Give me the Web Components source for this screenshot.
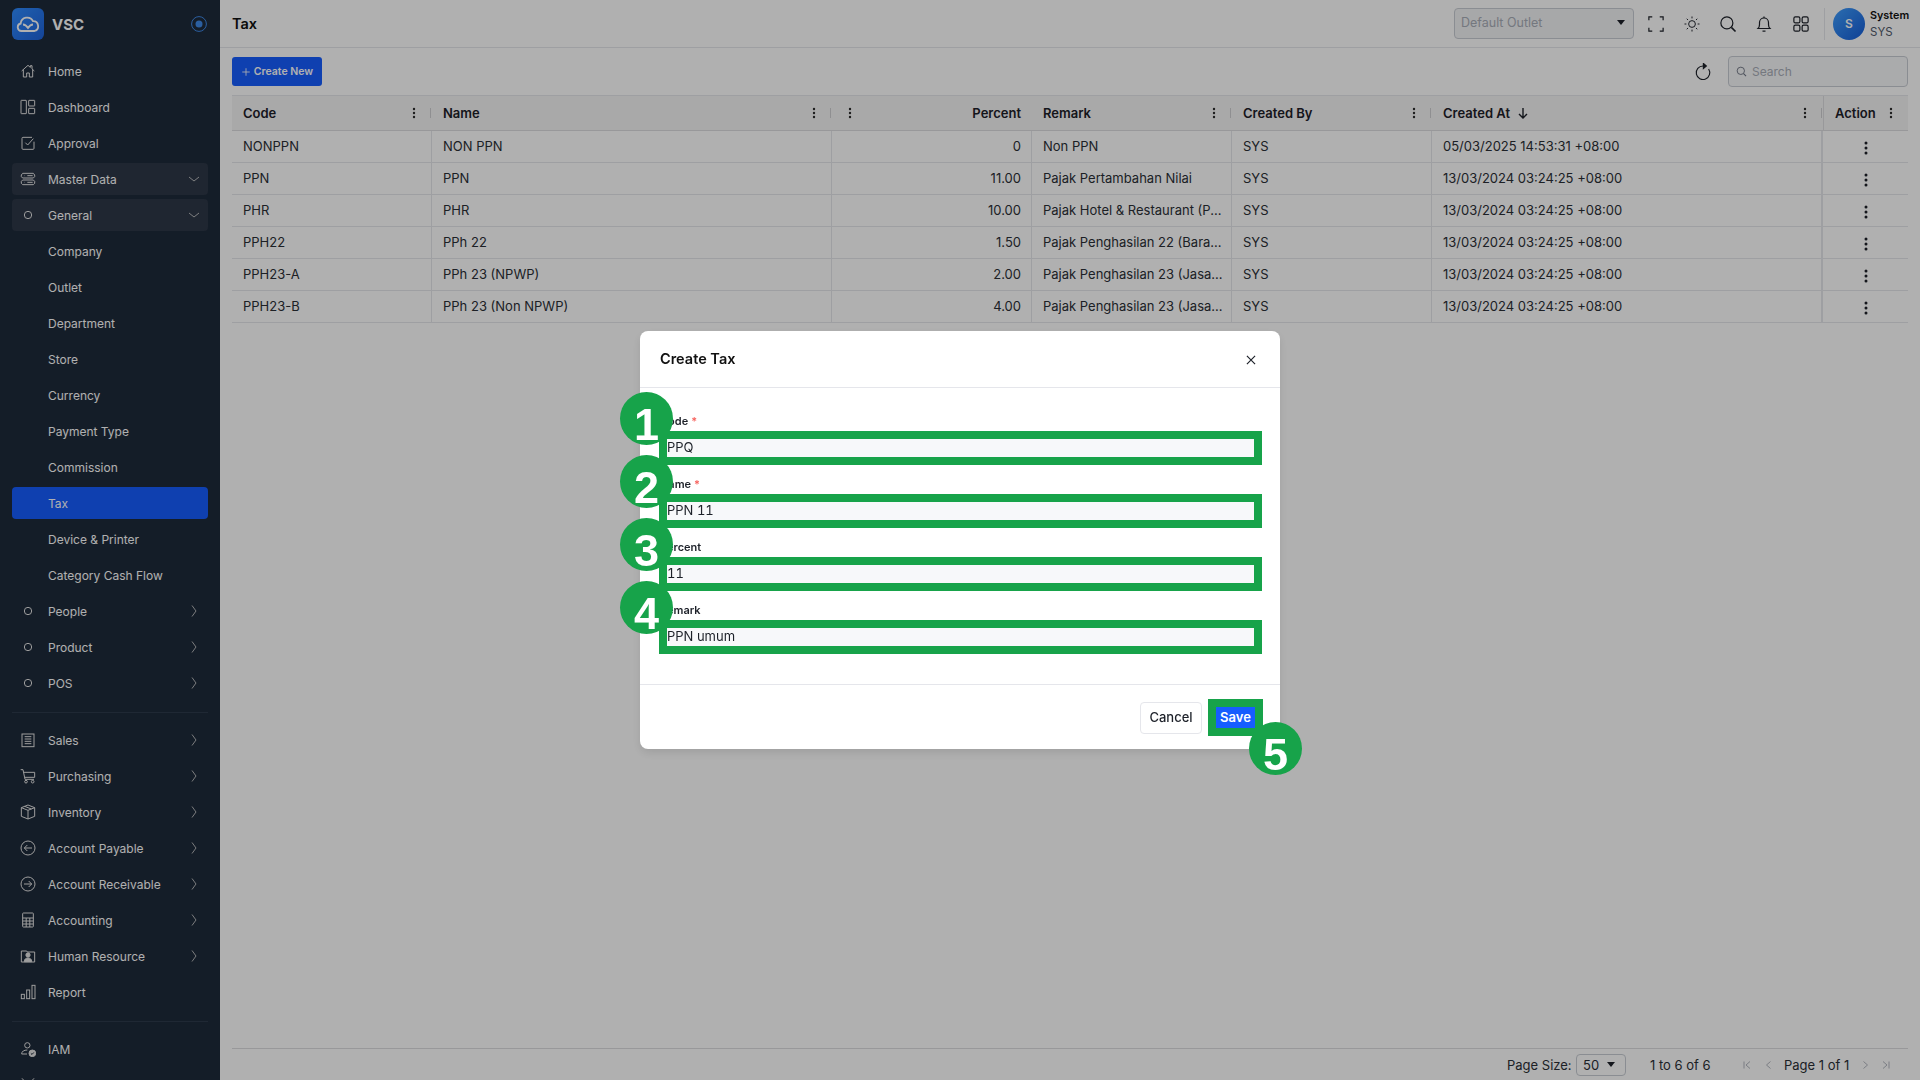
<!DOCTYPE html>
<html>
<head>
<meta charset="utf-8">
<title>Tax</title>
<style>
  html, body { margin: 0; height: 100%; overflow: hidden; background: #fff; }
  body { font-family: Inter, "Liberation Sans", sans-serif; font-size: 13px; color: #1d2129; }
  app-shell { height: 1080px; }
</style>
</head>
<body>
<app-shell>
  <side-nav slot="nav">
    <nav-item icon="home">Home</nav-item>
    <nav-item icon="dashboard">Dashboard</nav-item>
    <nav-item icon="approval">Approval</nav-item>
    <nav-item icon="master" open active>Master Data</nav-item>
    <nav-item icon="dot" open active>General</nav-item>
    <nav-item>Company</nav-item>
    <nav-item>Outlet</nav-item>
    <nav-item>Department</nav-item>
    <nav-item>Store</nav-item>
    <nav-item>Currency</nav-item>
    <nav-item>Payment Type</nav-item>
    <nav-item>Commission</nav-item>
    <nav-item selected>Tax</nav-item>
    <nav-item>Device &amp; Printer</nav-item>
    <nav-item>Category Cash Flow</nav-item>
    <nav-item icon="dot" more>People</nav-item>
    <nav-item icon="dot" more>Product</nav-item>
    <nav-item icon="dot" more>POS</nav-item>
    <nav-rule></nav-rule>
    <nav-item icon="sales" more>Sales</nav-item>
    <nav-item icon="cart" more>Purchasing</nav-item>
    <nav-item icon="box" more>Inventory</nav-item>
    <nav-item icon="payable" more>Account Payable</nav-item>
    <nav-item icon="receivable" more>Account Receivable</nav-item>
    <nav-item icon="calc" more>Accounting</nav-item>
    <nav-item icon="person" more>Human Resource</nav-item>
    <nav-item icon="report">Report</nav-item>
    <nav-rule></nav-rule>
    <nav-item icon="iam">IAM</nav-item>
    <nav-item icon="tools"></nav-item>
  </side-nav>
  <top-bar slot="top">Tax</top-bar>
  <list-toolbar slot="main"></list-toolbar>
  <tax-table slot="main"></tax-table>
  <page-footer slot="main"></page-footer>
</app-shell>

<modal-layer>
  <tax-dialog>
    <span slot="title">Create Tax</span>
    <tax-field step="1" required><span slot="label">Code</span>PPQ</tax-field>
    <tax-field step="2" required><span slot="label">Name</span>PPN 11</tax-field>
    <tax-field step="3"><span slot="label">Percent</span>11</tax-field>
    <tax-field step="4"><span slot="label">Remark</span>PPN umum</tax-field>
  </tax-dialog>
</modal-layer>

<script>
const ICONS = {
  home: '<path d="M2.500 12 12 3.500l3.500 3.100V4H18v4.900l3.500 3.100"/><path d="M5 10v11h5v-6h4v6h5V10"/>',
  dashboard: '<rect x="1.500" y="2" width="8" height="20" rx=".5"/><rect x="13" y="2" width="9" height="8.500" rx=".5"/><rect x="13" y="14" width="9" height="8" rx=".5"/>',
  approval: '<path d="M21 10v10a1.500 1.500 0 0 1-1.500 1.500h-15A1.500 1.500 0 0 1 3 20V5a1.500 1.500 0 0 1 1.500-1.500H18"/><path d="M8 11.500l3.500 3.500L20 5.500"/>',
  master: '<path d="M4 3.500h16l2 2.500v2.500l-2 2H4l-2-2V6z"/><path d="M4 13.500h16l2 2v3l-2 2H4l-2-2v-3z"/><path d="M6 7h.5M6 17h.5M11 7h8M11 17h8"/>',
  dot: '<circle cx="12" cy="12" r="5.500"/>',
  sales: '<rect x="3" y="3" width="18" height="19"/><path d="M7 7h10M7 10.500h10M7 14h10M7 17.500h10"/>',
  cart: '<path d="M1 2.500h3.500l3 14.500H21"/><path d="M5.500 6.500H22v7.500H7.500"/><circle cx="9" cy="20.500" r="2"/><circle cx="19" cy="20.500" r="2"/>',
  box: '<path d="M12 1.500 22 5.500v13l-10 4-10-4v-13z"/><path d="M2 5.500l10 4 10-4M12 9.500v13M7 3.500l10 4"/>',
  payable: '<circle cx="12" cy="12" r="10.500"/><path d="M18 12H6.500M11 7.500 6.500 12l4.500 4.500"/>',
  receivable: '<circle cx="12" cy="12" r="10.500"/><path d="M6 12h11.500M13 7.500l4.500 4.500-4.500 4.500"/>',
  calc: '<rect x="4" y="1.500" width="16" height="21" rx="1"/><path d="M4 9h16M4 13.500h16M4 18h16M9.300 9v13.500M14.700 9v13.500"/>',
  person: '<path d="M2 4.500h8l1 1.500h11v15H2z"/><circle cx="12" cy="10.500" r="3.200" fill="currentColor"/><path d="M6.500 20.500c0-3.500 2-5.500 5.500-5.500s5.500 2 5.500 5.500z" fill="currentColor"/>',
  report: '<rect x="2" y="15.500" width="4.500" height="6.500"/><rect x="10" y="9" width="4.500" height="13"/><rect x="18" y="2" width="4.500" height="20"/>',
  iam: '<circle cx="11" cy="6.500" r="4"/><path d="M2.500 19.500c0-4 3.500-6 8.500-6M2.500 19.500h8"/><circle cx="18.500" cy="18.500" r="5" fill="currentColor"/><path d="M16.300 18.500l1.700 1.700 2.700-3" stroke="#1e2a3a"/>',
  tools: '<path d="M3 2l8 9M21 2l-8 9M12 11v11"/>',
  fullscreen: '<path d="M7 2.500H2.500V7M17 2.500h4.500V7M7 21.500H2.500V17M17 21.500h4.500V17"/>',
  sun: '<circle cx="12" cy="12" r="4.500"/><path d="M12 2v2.500M12 19.500V22M2 12h2.500M19.500 12H22M5 5l1.700 1.700M17.300 17.300 19 19M5 19l1.700-1.700M17.300 6.700 19 5"/>',
  search: '<circle cx="10.500" cy="10.500" r="8"/><path d="M16.500 16.500 22 22" stroke-width="2.200"/>',
  bell: '<path d="M4 18c1.500-1.500 2-3 2-5.500V10a6 6 0 0 1 12 0v2.500c0 2.500.5 4 2 5.500z"/><path d="M10 21.500h4"/><path d="M12 2v2"/>',
  apps: '<rect x="2.500" y="2.500" width="8" height="8" rx="2"/><rect x="13.500" y="2.500" width="8" height="8" rx="2"/><rect x="2.500" y="13.500" width="8" height="8" rx="2"/><rect x="13.500" y="13.500" width="8" height="8" rx="2"/>',
  refresh: '<path d="M19.500 8A9 9 0 1 1 12 4h3"/><path d="M12.500 .5 16.500 4l-4 3.500z" fill="currentColor"/>',
  close: '<path d="M5 5l14 14M19 5 5 19"/>',
  first: '<path d="M6 5v14M18 5l-8 7 8 7"/>',
  prev: '<path d="M15 5l-8 7 8 7"/>',
  next: '<path d="M9 5l8 7-8 7"/>',
  last: '<path d="M18 5v14M6 5l8 7-8 7"/>',
  chevronDown: '<path d="M2 8l10 8 10-8"/>',
  chevronRight: '<path d="M8 1l8 11-8 11"/>',
  plusSign: '<path d="M12 3v18M3 12h18"/>',
};

function icon(name, size, width) {
  return `<svg width="${size}" height="${size}" viewBox="0 0 24 24" fill="none" stroke="currentColor" stroke-width="${width || 1.5}">${ICONS[name]}</svg>`;
}

const DOTS = `<svg width="4" height="12" viewBox="0 0 4 12" fill="#2b2b2b"><circle cx="2" cy="2" r="1.200"/><circle cx="2" cy="6" r="1.200"/><circle cx="2" cy="10" r="1.200"/></svg>`;
const ROW_DOTS = `<svg width="4" height="14" viewBox="0 0 4 14" fill="#1d2129"><circle cx="2" cy="2" r="1.500"/><circle cx="2" cy="7" r="1.500"/><circle cx="2" cy="12" r="1.500"/></svg>`;
const CARET = `<svg width="8" height="5" viewBox="0 0 8 5" fill="#1d2129"><path d="M0 0h8L4 5z"/></svg>`;

class ShadowElement extends HTMLElement {
  constructor() {
    super();
    this.attachShadow({ mode: "open" });
  }
  connectedCallback() {
    this.shadowRoot.innerHTML = this.render();
  }
}

class AppShell extends ShadowElement {
  render() {
    return `<style>
      :host { display: grid; grid-template-columns: 220px 1fr; height: 1080px; }
      .main { display: flex; flex-direction: column; min-width: 0; height: 1080px; }
      .body { display: flex; flex-direction: column; flex: 1; padding: 0 12px; min-height: 0; }
    </style>
    <slot name="nav"></slot>
    <div class="main">
      <slot name="top"></slot>
      <div class="body"><slot name="main"></slot></div>
    </div>`;
  }
}

class SideNav extends ShadowElement {
  render() {
    return `<style>
      :host { display: block; background: #1e2a3a; height: 1080px; overflow: hidden; color: #fff; }
      .brand { display: flex; align-items: center; height: 48px; padding: 0 13px 0 12px; box-sizing: border-box; }
      .logo { width: 32px; height: 32px; border-radius: 6px; background: linear-gradient(135deg, #2f8cff, #1e63dc); display: flex; align-items: center; justify-content: center; }
      .name { margin-left: 8px; font-weight: 700; font-size: 15px; flex: 1; }
      .list { display: flex; flex-direction: column; gap: 4px; padding: 7px 12px 0; }
    </style>
    <div class="brand">
      <div class="logo"><svg width="24" height="16" viewBox="0 0 24 16" fill="none" stroke="#fff" stroke-width="1.800"><path d="M5.500 15a3.800 3.800 0 0 1-.8-7.500A6.500 6.500 0 0 1 17 5.200 5 5 0 0 1 18.500 15z"/><path d="M7 8.500c2.500 0 3.800 1.700 5 3.500 1.200-1.800 2.500-3.500 5-3.500"/></svg></div>
      <div class="name">VSC</div>
      <svg width="16" height="16" viewBox="0 0 16 16"><circle cx="8" cy="8" r="7.400" fill="none" stroke="#3f8ae8" stroke-width="1"/><circle cx="8" cy="8" r="3.500" fill="#3f8ae8"/></svg>
    </div>
    <div class="list"><slot></slot></div>`;
  }
}

class NavRule extends ShadowElement {
  render() {
    return `<style>:host { display: block; height: 1px; margin: 9px 0 7px; background: #2d3a4c; }</style>`;
  }
}

class NavItem extends ShadowElement {
  render() {
    const name = this.getAttribute("icon");
    const open = this.hasAttribute("open");
    const more = this.hasAttribute("more");
    return `<style>
      :host { display: flex; align-items: center; flex: none; height: 32px; border-radius: 4px; padding: 0 8px; font-size: 12px; color: #fff; }
      :host([active]) { background: #2d3747; }
      :host([selected]) { background: #165dff; }
      .icon { width: 16px; height: 16px; margin-right: 12px; flex: none; color: #e4e4e4; }
      .icon svg { display: block; }
      .label { flex: 1; white-space: nowrap; line-height: 18px; padding-top: 1px; }
      .arrow { width: 12px; height: 12px; color: #d0d0d0; }
      .arrow svg { display: block; }
    </style>
    <span class="icon">${name ? icon(name, 16) : ""}</span>
    <span class="label"><slot></slot></span>
    ${open || more ? `<span class="arrow">${icon(open ? "chevronDown" : "chevronRight", 12, 1.7)}</span>` : ""}`;
  }
}

class TopBar extends ShadowElement {
  render() {
    const buttons = ["fullscreen", "sun", "search", "bell", "apps"]
      .map((n) => `<span class="btn">${icon(n, 18, n === "sun" ? 1.3 : 1.6)}</span>`)
      .join("");
    return `<style>
      :host { display: flex; align-items: center; height: 48px; box-sizing: border-box; border-bottom: 1px solid #e5e6eb; padding-left: 12px; flex: none; }
      .title { flex: 1; font-weight: 600; font-size: 14.500px; color: #111; }
      .outlet { width: 180px; height: 31px; box-sizing: border-box; border: 1px solid #c9cdd4; border-radius: 4px; background: #f2f3f5; display: flex; align-items: center; justify-content: space-between; padding: 0 8px 2px 6px; margin-right: 4px; color: #a9aeb8; font-size: 12.500px; }
      .btn { width: 36px; height: 36px; display: flex; align-items: center; justify-content: center; color: #1d2129; }
      .btn:last-of-type { margin-left: 1px; }
      .rule { width: 1px; height: 32px; background: #e5e6eb; margin: 0 8px 0 5px; }
      .avatar { width: 32px; height: 32px; border-radius: 50%; background: linear-gradient(135deg, #3f9fff, #165dd8); color: #fff; display: flex; align-items: center; justify-content: center; font-size: 12px; font-weight: 600; }
      .user { width: 38px; margin: 0 12px 0 5px; font-size: 11.500px; line-height: 16px; white-space: nowrap; }
      .user b { display: block; font-size: 10.800px; font-weight: 600; color: #111; }
      .user span { color: #4e5969; }
    </style>
    <div class="title"><slot></slot></div>
    <div class="outlet">Default Outlet ${CARET}</div>
    ${buttons}
    <div class="rule"></div>
    <div class="avatar">S</div>
    <div class="user"><b>System</b><span>SYS</span></div>`;
  }
}

class ListToolbar extends ShadowElement {
  render() {
    return `<style>
      :host { display: flex; align-items: center; height: 47px; flex: none; }
      .create { height: 29px; width: 90px; box-sizing: border-box; border-radius: 3px; background: #165dff; color: #fff; font-size: 10.500px; font-weight: 600; display: flex; align-items: center; justify-content: center; gap: 3px; white-space: nowrap; }
      .refresh { margin-left: auto; margin-right: 16px; display: flex; color: #1d2129; }
      .search { width: 180px; height: 31px; box-sizing: border-box; border: 1px solid #c9cdd4; border-radius: 4px; background: #f7f8fa; display: flex; align-items: center; gap: 5px; padding-left: 7px; color: #a9aeb8; font-size: 12px; }
      .search svg { color: #6b7280; }
    </style>
    <div class="create">${icon("plusSign", 10, 2)} Create New</div>
    <span class="refresh">${icon("refresh", 18, 1.5)}</span>
    <div class="search">${icon("search", 11, 2)} Search</div>`;
  }
}

const COLUMNS = [
  { label: "Code", w: 200 },
  { label: "Name", w: 400 },
  { label: "", w: 200, right: true, split: "Percent" },
  { label: "Remark", w: 200 },
  { label: "Created By", w: 200 },
  { label: "Created At", w: 391, sorted: true },
  { label: "Action", w: 85, last: true },
];

const ROWS = [
  ["NONPPN", "NON PPN", "0", "Non PPN", "SYS", "05/03/2025 14:53:31 +08:00"],
  ["PPN", "PPN", "11.00", "Pajak Pertambahan Nilai", "SYS", "13/03/2024 03:24:25 +08:00"],
  ["PHR", "PHR", "10.00", "Pajak Hotel & Restaurant (P...", "SYS", "13/03/2024 03:24:25 +08:00"],
  ["PPH22", "PPh 22", "1.50", "Pajak Penghasilan 22 (Bara...", "SYS", "13/03/2024 03:24:25 +08:00"],
  ["PPH23-A", "PPh 23 (NPWP)", "2.00", "Pajak Penghasilan 23 (Jasa...", "SYS", "13/03/2024 03:24:25 +08:00"],
  ["PPH23-B", "PPh 23 (Non NPWP)", "4.00", "Pajak Penghasilan 23 (Jasa...", "SYS", "13/03/2024 03:24:25 +08:00"],
];

class TaxTable extends ShadowElement {
  render() {
    const template = COLUMNS.map((c) => c.w + "px").join(" ");
    const head = COLUMNS.map((c) => {
      if (c.split) {
        return `<div class="th split"><span class="menu">${DOTS}</span><span class="grow right">${c.split}</span></div>`;
      }
      if (c.last) {
        return `<div class="th last"><span class="grow">${c.label}</span><span class="menu">${DOTS}</span></div>`;
      }
      const arrow = c.sorted ? `<svg class="sort" width="12" height="12" viewBox="0 0 12 12" fill="none" stroke="#1d2129" stroke-width="1.400"><path d="M6 1v10M2 7l4 4 4-4"/></svg>` : "";
      return `<div class="th"><span class="grow">${c.label}${arrow}</span><span class="menu">${DOTS}</span><i class="grip"></i></div>`;
    }).join("");
    const rows = ROWS.map((r) => {
      const cells = r.map((v, i) => `<div class="td ${i === 2 ? "right" : ""}">${v.replace("&", "&amp;")}</div>`).join("");
      return `<div class="row">${cells}<div class="td action">${ROW_DOTS}</div></div>`;
    }).join("");
    return `<style>
      :host { display: block; flex: none; }
      .row { display: grid; grid-template-columns: ${template}; height: 32px; box-sizing: border-box; border-bottom: 1px solid #e5e6eb; }
      .head { height: 36px; background: #f5f5f5; border-top: 1px solid #e5e6eb; border-bottom: 1px solid #dcdde0; }
      .th { position: relative; display: flex; align-items: center; padding: 0 17px 0 11px; font-weight: 600; font-size: 13px; color: #1d2129; }
      .th.split { padding-left: 16px; padding-right: 15px; }
      .th.last { padding: 0 16px 0 11px; border-left: 1px solid #dcdde0; }
      .grow { flex: 1; display: flex; align-items: center; white-space: nowrap; }
      .grow.right { justify-content: flex-end; margin-right: -4px; }
      .sort { margin-left: 7px; }
      .menu { display: flex; margin-right: -1px; }
      .grip { position: absolute; right: 1px; top: 12px; width: 1px; height: 10px; background: #cfd0d3; }
      .td { padding: 0 11px; line-height: 31px; font-size: 13px; color: #2b2f36; border-right: 1px solid #e5e6eb; white-space: nowrap; overflow: hidden; }
      .td.right { text-align: right; padding-right: 10px; }
      .td.action { border-right: 0; display: flex; align-items: center; justify-content: center; padding-top: 2px; box-sizing: border-box; height: 31px; }
      .td:nth-last-child(2) { border-right: 2px solid #e5e6eb; }
    </style>
    <div class="row head">${head}</div>
    ${rows}`;
  }
}

class PageFooter extends ShadowElement {
  render() {
    const pager = (name) => `<span class="pg">${icon(name, 12, 1.8)}</span>`;
    return `<style>
      :host { display: flex; align-items: center; margin-top: auto; height: 32px; box-sizing: border-box; border-top: 1px solid #dcdde0; padding-left: 1275px; font-size: 13px; color: #2b2f36; white-space: nowrap; flex: none; }
      span { flex: none; }
      .name { width: 63px; }
      .size { width: 50px; height: 22px; box-sizing: border-box; border: 1px solid #c9cdd4; border-radius: 4px; margin: 0 24px 0 6px; display: flex; align-items: center; justify-content: space-between; padding: 0 10px 0 6px; }
      .count { width: 91px; }
      .pg { width: 12px; display: flex; color: #a9aeb8; margin-right: 10px; }
      .page { width: 67px; margin: 0 8px 0 -1px; }
      .pg:last-child { margin-left: -1px; margin-right: 0; }
    </style>
    <span class="name">Page Size:</span>
    <span class="size">50 ${CARET}</span>
    <span class="count">1 to 6 of 6</span>
    ${pager("first")}${pager("prev")}
    <span class="page">Page 1 of 1</span>
    ${pager("next")}${pager("last")}`;
  }
}

class ModalLayer extends ShadowElement {
  render() {
    return `<style>
      :host { position: fixed; inset: 0; background: rgba(0, 0, 0, 0.31); display: flex; align-items: center; justify-content: center; }
    </style><slot></slot>`;
  }
}

class TaxDialog extends ShadowElement {
  render() {
    return `<style>
      :host { display: block; width: 640px; background: #fff; border-radius: 8px; box-shadow: 0 4px 10px rgba(0, 0, 0, 0.1); color: #1d2129; }
      header { display: flex; align-items: center; justify-content: space-between; height: 56px; padding: 0 22px 0 20px; border-bottom: 1px solid #e5e6eb; font-weight: 600; font-size: 14.500px; color: #111; }
      header svg { display: block; color: #1d2129; margin-top: 1px; }
      header span { display: block; }
      .title { margin-top: -2px; }
      .body { display: flex; flex-direction: column; padding: 23px 18px 21px 19px; }
      footer { display: flex; align-items: center; justify-content: flex-end; gap: 6px; padding: 14px 17px 13px 0; border-top: 1px solid #e5e6eb; }
      .cancel { width: 62px; height: 32px; box-sizing: border-box; border: 1px solid #e5e6eb; border-radius: 4px; display: flex; align-items: center; justify-content: center; padding-bottom: 2px; font-weight: 500; font-size: 13px; color: #1d2129; }
      .save-frame { position: relative; border: 8px solid #17a34a; }
      .save { display: flex; align-items: center; justify-content: center; box-sizing: border-box; width: 39px; height: 21px; padding-bottom: 2px; background: #165dff; color: #fff; font-weight: 600; font-size: 13px; }
      step-badge { left: 33px; top: 15px; }
    </style>
    <header><div class="title"><slot name="title"></slot></div>${icon("close", 14, 2)}</header>
    <div class="body"><slot></slot></div>
    <footer>
      <div class="cancel">Cancel</div>
      <div class="save-frame"><div class="save">Save</div><step-badge n="5"></step-badge></div>
    </footer>`;
  }
}

class TaxField extends ShadowElement {
  render() {
    const star = this.hasAttribute("required") ? `<span class="star">*</span>` : "";
    return `<style>
      :host { display: block; position: relative; height: 63px; }
      .label { height: 20px; line-height: 20px; padding-left: 1px; font-size: 11px; font-weight: 600; color: #1d2129; }
      .star { color: #f76560; margin-left: 3px; }
      .frame { border: 8px solid #17a34a; height: 18px; background: #f7f8fa; line-height: 17px; font-size: 13px; color: #1d2129; font-variant-numeric: tabular-nums; }
      step-badge { left: -39px; top: -19px; }
    </style>
    <div class="label"><slot name="label"></slot>${star}</div>
    <div class="frame"><slot></slot></div>
    <step-badge n="${this.getAttribute("step")}"></step-badge>`;
  }
}

class StepBadge extends ShadowElement {
  render() {
    return `<style>
      :host { position: absolute; width: 53px; height: 53px; border-radius: 50%; background: #17a34a; color: #fff; display: flex; align-items: center; justify-content: center; font: 700 45px/53px "Liberation Sans", Arial, sans-serif; }
      span { display: block; transform: translateY(6px); }
    </style><span>${this.getAttribute("n")}</span>`;
  }
}

customElements.define("app-shell", AppShell);
customElements.define("side-nav", SideNav);
customElements.define("nav-rule", NavRule);
customElements.define("nav-item", NavItem);
customElements.define("top-bar", TopBar);
customElements.define("list-toolbar", ListToolbar);
customElements.define("tax-table", TaxTable);
customElements.define("page-footer", PageFooter);
customElements.define("modal-layer", ModalLayer);
customElements.define("tax-dialog", TaxDialog);
customElements.define("tax-field", TaxField);
customElements.define("step-badge", StepBadge);
</script>
</body>
</html>
